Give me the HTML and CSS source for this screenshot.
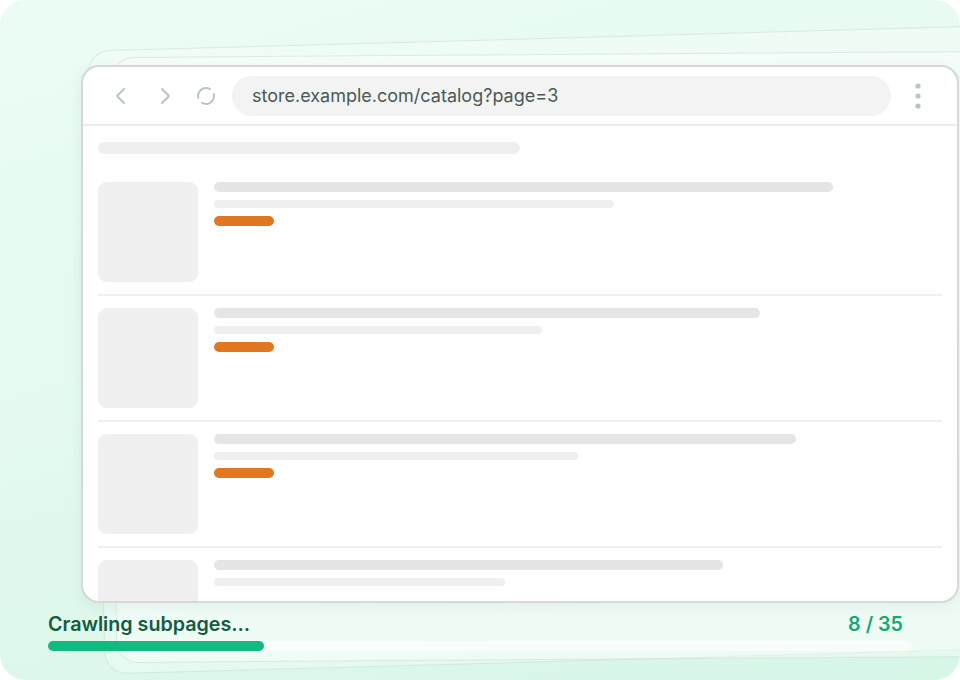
FILE: index.html
```html
<!DOCTYPE html>
<html lang="en">
<head>
<meta charset="utf-8">
<title>Crawling subpages</title>
<link rel="stylesheet" href="styles.css">
</head>
<body>
<div class="page">
  <div class="back back-a"></div>
  <div class="back back-b"></div>

  <div class="browser">
    <div class="toolbar">
      <span class="tb-icon back-btn">
        <svg viewBox="0 0 24 24" width="24" height="24"><path d="M15 5 L8 12 L15 19" fill="none" stroke="#b7c6c1" stroke-width="2" stroke-linecap="round" stroke-linejoin="round"/></svg>
      </span>
      <span class="tb-icon fwd-btn">
        <svg viewBox="0 0 24 24" width="24" height="24"><path d="M9 5 L16 12 L9 19" fill="none" stroke="#b7c6c1" stroke-width="2" stroke-linecap="round" stroke-linejoin="round"/></svg>
      </span>
      <span class="tb-icon reload-btn">
        <svg viewBox="0 0 24 24" width="24" height="24"><circle cx="12" cy="12" r="8" fill="none" stroke="#b7c6c1" stroke-width="2" stroke-linecap="round" stroke-dasharray="18.6 6.5" transform="rotate(-15 12 12)"/></svg>
      </span>
      <div class="url">store.example.com/catalog?page=3</div>
      <span class="tb-icon dots">
        <svg viewBox="0 0 20 30" width="20" height="30"><circle cx="10" cy="5" r="2.6" fill="#b7c6c1"/><circle cx="10" cy="15" r="2.6" fill="#b7c6c1"/><circle cx="10" cy="25" r="2.6" fill="#b7c6c1"/></svg>
      </span>
    </div>
    <div class="content">
      <div class="crumb"></div>
      <div class="row">
        <div class="thumb"></div>
        <div class="lines">
          <div class="l-title" style="width:619px"></div>
          <div class="l-sub" style="width:400px"></div>
          <div class="l-price"></div>
        </div>
      </div>
      <div class="row">
        <div class="thumb"></div>
        <div class="lines">
          <div class="l-title" style="width:546px"></div>
          <div class="l-sub" style="width:328px"></div>
          <div class="l-price"></div>
        </div>
      </div>
      <div class="row">
        <div class="thumb"></div>
        <div class="lines">
          <div class="l-title" style="width:582px"></div>
          <div class="l-sub" style="width:364px"></div>
          <div class="l-price"></div>
        </div>
      </div>
      <div class="row">
        <div class="thumb"></div>
        <div class="lines">
          <div class="l-title" style="width:509px"></div>
          <div class="l-sub" style="width:291px"></div>
        </div>
      </div>
    </div>
  </div>

  <div class="status">
    <div class="status-row">
      <span class="status-label">Crawling subpages...</span>
      <span class="status-count">8 / 35</span>
    </div>
    <div class="track"><div class="fill" style="width:25%"></div></div>
  </div>
</div>
</body>
</html>
```
FILE: styles.css
```css
html, body {
  margin: 0;
  padding: 0;
  background: #ffffff;
}

body {
  font-family: Inter, "Noto Sans", "Liberation Sans", sans-serif;
}

.page {
  position: relative;
  width: 960px;
  height: 680px;
  border-radius: 26px;
  overflow: hidden;
  background: linear-gradient(165deg, #ebfcf4 0%, #e4faef 45%, #d6f6e6 100%);
  display: flex;
  flex-direction: column;
}

.back {
  position: absolute;
  border-radius: 22px;
  background: rgba(255, 255, 255, 0.3);
  border: 1px solid rgba(190, 210, 200, 0.45);
}

.back-a {
  left: 96px;
  top: 38px;
  width: 900px;
  height: 622px;
  transform: rotate(-1.6deg);
}

.back-b {
  left: 114px;
  top: 54px;
  width: 880px;
  height: 604px;
  transform: rotate(-0.4deg);
  background: rgba(255, 255, 255, 0.36);
}

.browser {
  position: relative;
  margin: 65px 0 0 81px;
  width: 874px;
  height: 534px;
  border: 2px solid #d6d8d7;
  border-radius: 18px;
  background: #ffffff;
  overflow: hidden;
  box-shadow: 0 4px 14px rgba(40, 80, 60, 0.07);
  flex: none;
}

.toolbar {
  height: 57px;
  border-bottom: 2px solid #ececec;
  display: flex;
  align-items: center;
}

.tb-icon {
  display: flex;
  align-items: center;
  justify-content: center;
  width: 24px;
  height: 24px;
}

.back-btn { margin-left: 26px; }
.fwd-btn { margin-left: 20px; }
.reload-btn { margin-left: 17px; }

.url {
  margin-left: 14px;
  width: 659px;
  height: 40px;
  border-radius: 20px;
  background: #f3f3f3;
  box-sizing: border-box;
  padding-left: 20px;
  display: flex;
  align-items: center;
  font-size: 18px;
  color: #4b5955;
}

.dots {
  margin-left: 17px;
  width: 20px;
  height: 30px;
}

.content {
  padding: 16px 15px 0 15px;
}

.crumb {
  width: 422px;
  height: 12px;
  border-radius: 6px;
  background: #efefef;
  margin-bottom: 16px;
}

.row {
  display: flex;
  gap: 16px;
  padding: 12px 0;
  border-bottom: 2px solid #efefef;
}

.thumb {
  width: 100px;
  height: 100px;
  border-radius: 9px;
  background: #f0f0f0;
  flex: none;
}

.lines {
  display: flex;
  flex-direction: column;
  gap: 8px;
}

.l-title {
  height: 10px;
  border-radius: 5px;
  background: #e5e5e5;
}

.l-sub {
  height: 8px;
  border-radius: 4px;
  background: #efefef;
}

.l-price {
  width: 60px;
  height: 10px;
  border-radius: 5px;
  background: #e07822;
}

.status {
  position: relative;
  margin: 8px 48px 0 48px;
  width: 864px;
}

.status-row {
  display: flex;
  justify-content: space-between;
  align-items: baseline;
  height: 26px;
  line-height: 26px;
}

.status-label {
  font-size: 19.7px;
  font-weight: 600;
  color: #145c41;
}

.status-count {
  font-size: 19.7px;
  font-weight: 600;
  color: #17a873;
  margin-right: 9px;
}

.track {
  margin-top: 4px;
  height: 10px;
  border-radius: 5px;
  background: rgba(255, 255, 255, 0.6);
}

.fill {
  height: 10px;
  border-radius: 5px;
  background: #12b981;
}
```
